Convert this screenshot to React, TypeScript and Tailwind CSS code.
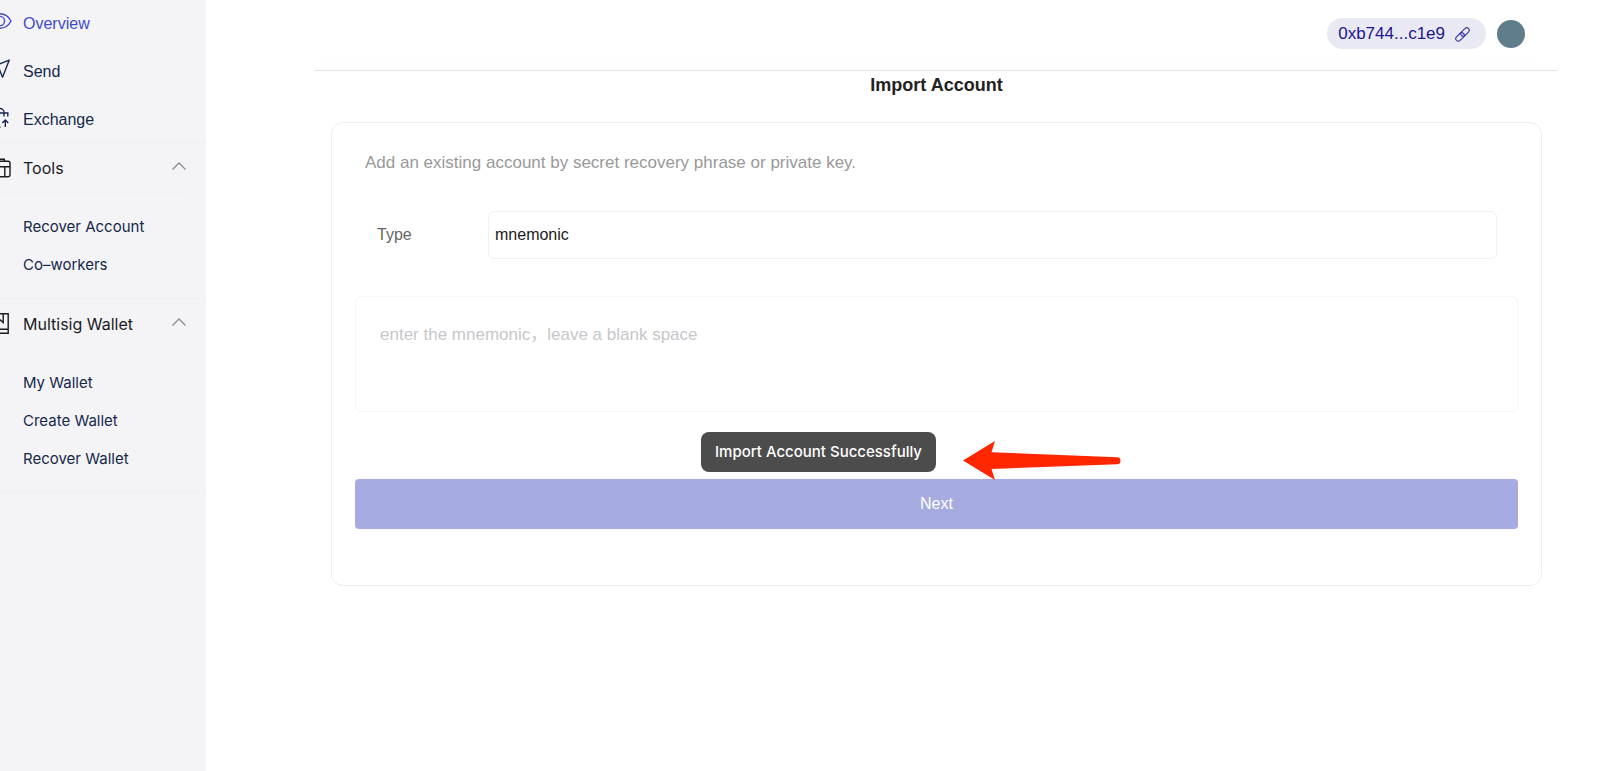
import React from "react";

const iconProps = {
  viewBox: "-12 -12 24 24",
  fill: "none",
  stroke: "currentColor",
  strokeWidth: 1.4,
  className: "-ml-3 size-6 shrink-0 overflow-visible",
  "aria-hidden": true,
};

const EyeIcon = () => (
  <svg {...iconProps}>
    <path d="M-11.500 -3C-8.500 -7.800 -4.500 -10.200 0 -10.200S8.500 -7.800 11 -3C8.500 1.800 4.500 4.200 0 4.200S-8.500 1.800 -11.500 -3Z" />
    <circle cx="0" cy="-3" r="4.600" />
  </svg>
);

const SendIcon = () => (
  <svg {...iconProps} strokeLinejoin="round">
    <path d="M9.200 -11.800L-11 -4L-1 -3.500L2.500 5.200Z" />
  </svg>
);

const ExchangeIcon = () => (
  <svg {...iconProps}>
    <path d="M-4 -6V-7.500A4 4 0 0 1 4 -7.500V-3.500M-8 7V-7H7.800V-3.500M-8 7H0.500M5.300 7V0M2.300 3L5.300 0L8.300 3" />
  </svg>
);

const ToolsIcon = () => (
  <svg {...iconProps}>
    <path d="M-4.500 -6.800V-8.800H4.300V-6.800" />
    <rect x="-10" y="-6.700" width="20" height="15.500" rx="2" />
    <path d="M-10 -1.200H10M-4.800 -1.200V8.500M4.800 -1.200V8.500" />
  </svg>
);

const WalletIcon = () => (
  <svg {...iconProps}>
    <path d="M8.200 -10.200H-8V9.200H8.200ZM-8 5.200H8.200M3.200 -10V-1.500L0.200 -4L-2.800 -1.500V-10" />
  </svg>
);

const Chevron = () => (
  <svg viewBox="0 0 14 8" className="mb-1 ml-auto h-2 w-[14px]" fill="none" stroke="#8c8c90" strokeWidth="1.300" aria-hidden="true">
    <path d="M0.500 7.500L7 1L13.500 7.500" />
  </svg>
);

const links = [
  { label: "Overview", Icon: EyeIcon, color: "text-[#3f4bcc]" },
  { label: "Send", Icon: SendIcon, color: "text-[#14284b]" },
  { label: "Exchange", Icon: ExchangeIcon, color: "text-[#14284b]" },
];

const groups = [
  { label: "Tools", Icon: ToolsIcon, items: ["Recover Account", "Co–workers"] },
  { label: "Multisig Wallet", Icon: WalletIcon, items: ["My Wallet", "Create Wallet", "Recover Wallet"] },
];

function Sidebar() {
  return (
    <aside className="w-[206px] shrink-0 overflow-hidden bg-[#f4f4f7] font-['Inter',sans-serif] text-[15px]">
      <nav>
        <div className="-mb-0.5 font-['Liberation_Sans',sans-serif] text-base">
          {links.map(({ label, Icon, color }) => (
            <a key={label} href="#" className={`flex h-12 items-center gap-[11px] ${color}`}>
              <Icon />
              {label}
            </a>
          ))}
        </div>
        {groups.map(({ label, Icon, items }) => (
          <section key={label} className="border-t border-[#f0f0f3]">
            <button type="button" className="flex h-[50px] w-full items-center gap-[11px] pr-5 text-base text-[#1b1b1f]">
              <Icon />
              {label}
              <Chevron />
            </button>
            <div className="mr-[18px] border-t border-[#f1f1f4]" />
            <ul className="py-[14px] pl-[23px] text-[#14284b]">
              {items.map((item) => (
                <li key={item}>
                  <a href="#" className="flex h-[38px] items-center">{item}</a>
                </li>
              ))}
            </ul>
          </section>
        ))}
        <div className="border-t border-[#f0f0f3]" />
      </nav>
    </aside>
  );
}

function Header() {
  return (
    <header className="border-b border-[#e4e4e4]">
      <div className="mr-5 flex h-[60px] items-center justify-end gap-[11px] border-b border-[#fdfdfd] pt-2 pr-[13px]">
        <button type="button" className="flex h-[31px] items-center gap-[10px] rounded-full bg-[#e9e9f4] pr-4 pl-[11px] text-[17px] text-[#1d1691]">
          0xb744...c1e9
          <svg viewBox="0 0 16 16" className="mt-[2px] size-[15px]" fill="none" stroke="#3c37a3" strokeWidth="1.200" aria-hidden="true">
            <g transform="rotate(-45 8 8)">
              <rect x="-1" y="5.300" width="10.500" height="5.400" rx="2.700" />
              <rect x="6.500" y="5.300" width="10.500" height="5.400" rx="2.700" />
            </g>
          </svg>
        </button>
        <button type="button" aria-label="Account" className="size-7 rounded-full bg-[#607d8b]" />
      </div>
      <div className="h-[10px]" />
    </header>
  );
}

export default function App() {
  return (
    <div className="flex min-h-screen bg-white font-['Liberation_Sans','Noto_Sans_CJK_SC',sans-serif]">
      <Sidebar />
      <main className="min-w-0 flex-1 pr-[42px] pl-[109px]">
        <Header />
        <h1 className="text-center text-lg leading-7 font-bold text-[#222222]">Import Account</h1>
        <form className="mx-4 mt-[23px] rounded-xl border border-[#eeeeee] px-[23px] pt-7 pb-14" onSubmit={(e) => e.preventDefault()}>
          <p className="pl-[10px] text-[17px] leading-6 text-[#999999]">
            Add an existing account by secret recovery phrase or private key.
          </p>
          <div className="mt-9 flex items-center pr-[21px] pl-[22px]">
            <label htmlFor="type" className="w-[111px] text-base text-[#666666]">Type</label>
            <select id="type" className="h-12 flex-1 appearance-none rounded-md border border-[#f0f0f0] bg-white px-[6px] text-base text-[#1a1a1a]">
              <option>mnemonic</option>
            </select>
          </div>
          <textarea
            aria-label="Mnemonic"
            placeholder="enter the mnemonic，leave a blank space"
            className="mt-[37px] block h-[116px] w-full resize-none rounded-md border border-[#f6f6f6] px-6 pt-[26px] text-[17px] leading-6 placeholder:text-[#c6c7cb]"
          />
          <div className="relative h-[67px]">
            <div role="status" className="absolute top-5 left-[346px] z-10 flex h-10 items-center rounded-lg bg-[#4c4c4c] px-[14px] font-['Inter',sans-serif] text-[15px] font-medium whitespace-nowrap text-white">
              Import Account Successfully
            </div>
            <svg viewBox="0 0 158 39" className="absolute top-[29px] left-[608px] z-10 h-[39px] w-[158px]" fill="#ff2600" aria-hidden="true">
              <path d="M0 19.500L32 0L28.500 11.300L154 16.200A3.500 3.500 0 0 1 154 23.200L28.500 28L32 39Z" />
            </svg>
          </div>
          <button type="submit" className="h-[50px] w-full rounded-sm bg-[#a5abe0] text-base text-white">Next</button>
        </form>
      </main>
    </div>
  );
}
